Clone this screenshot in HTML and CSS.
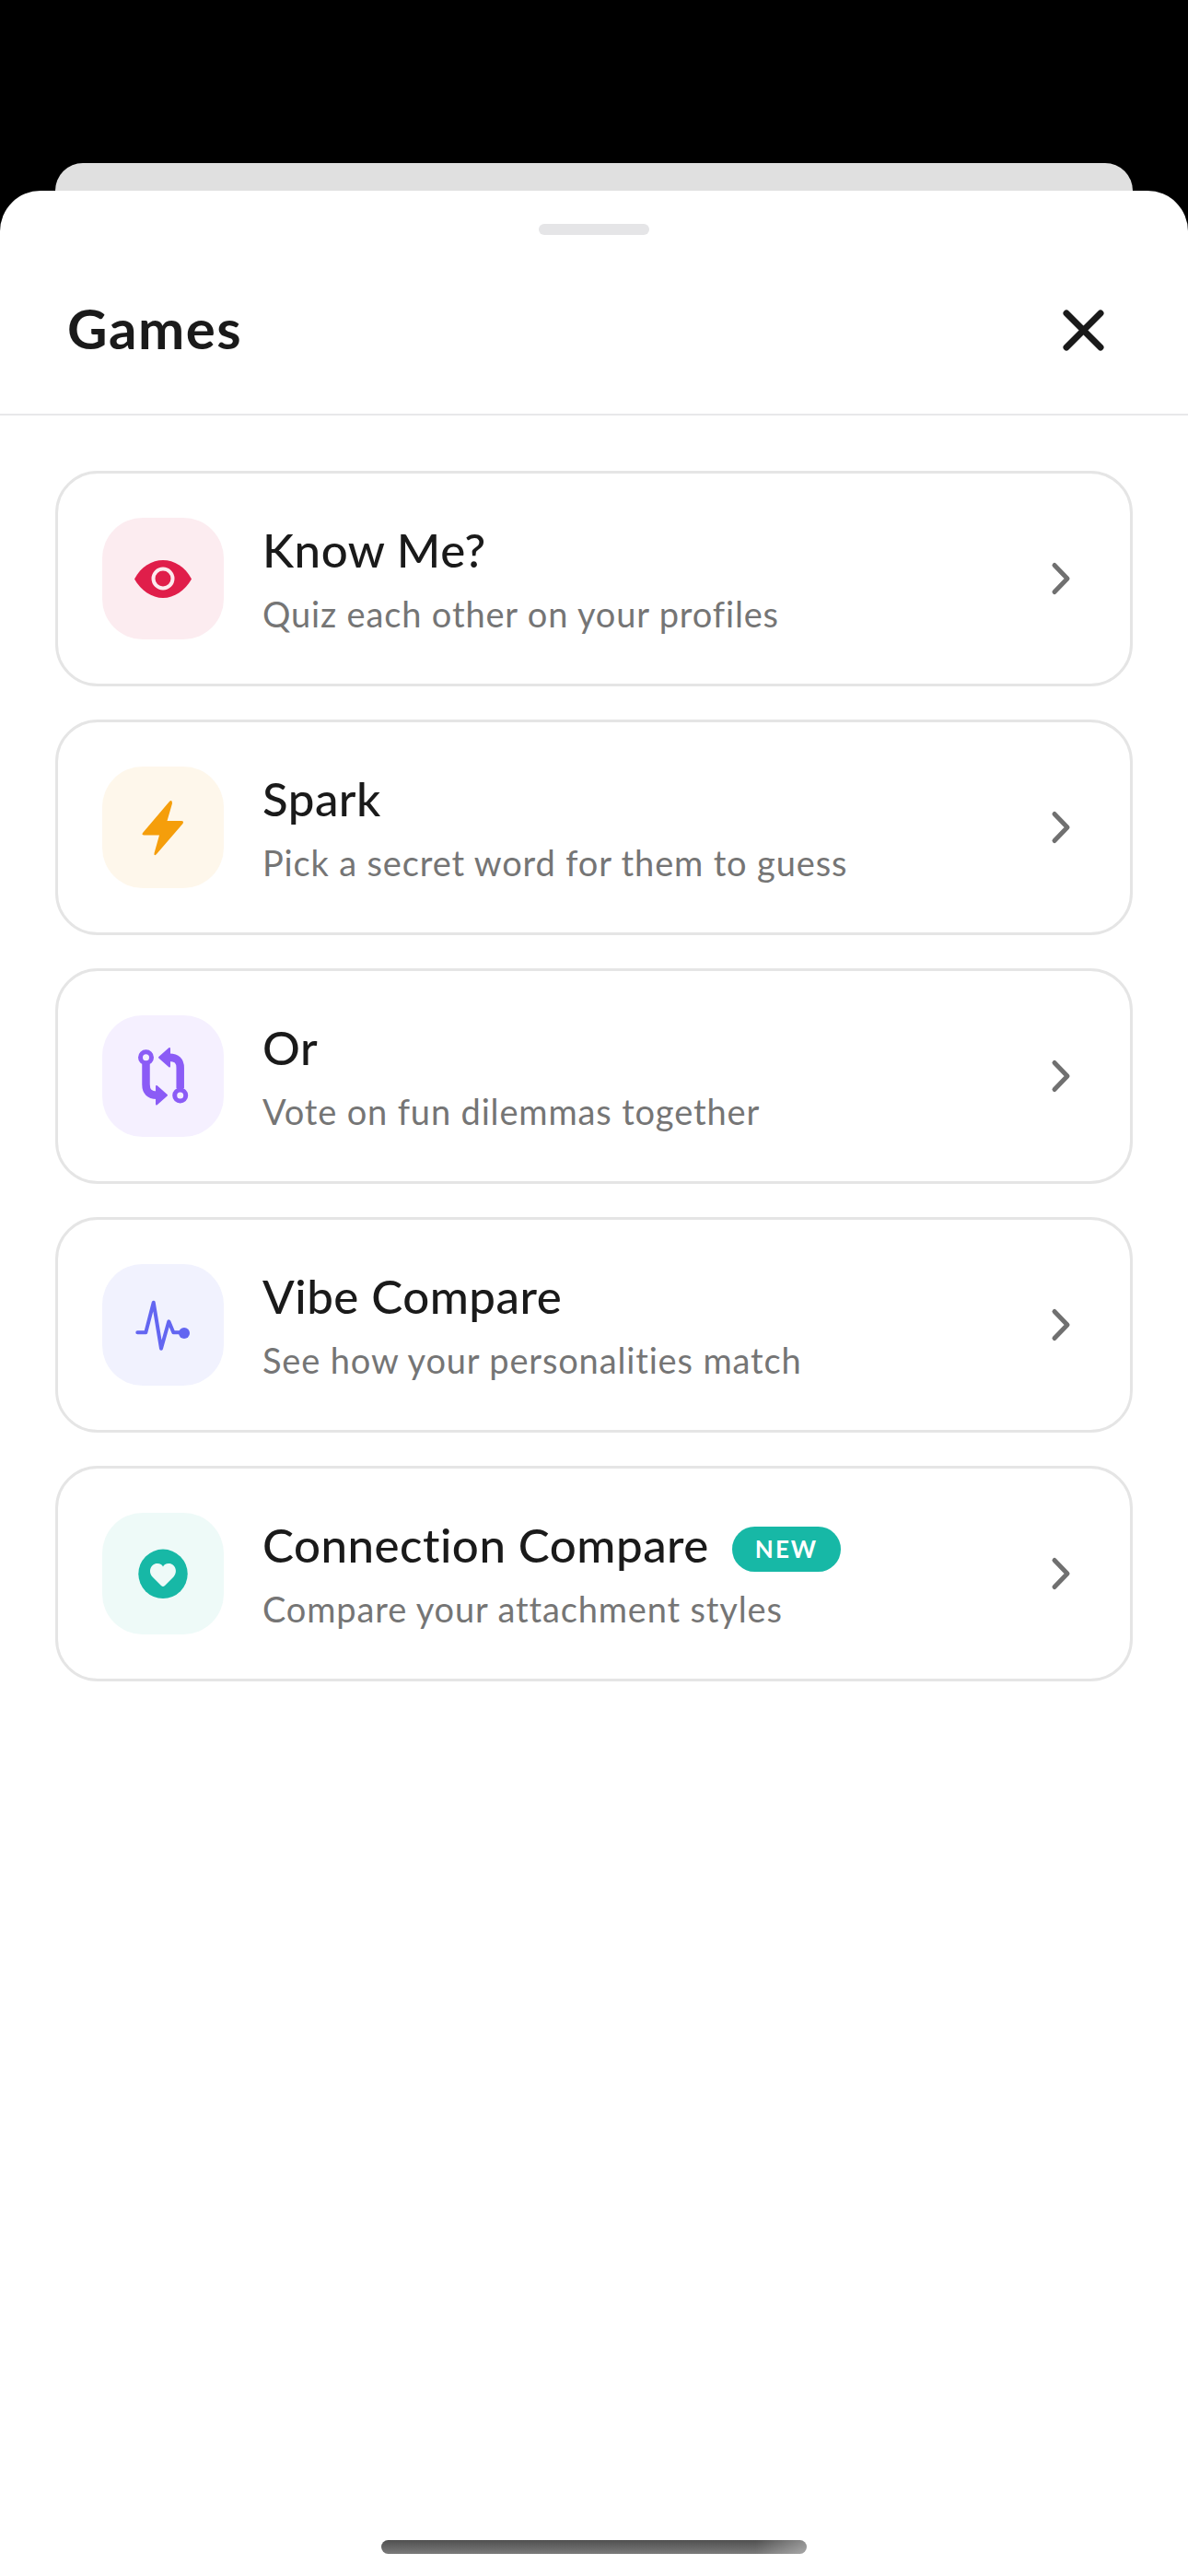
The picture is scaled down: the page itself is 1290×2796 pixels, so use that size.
FILE: index.html
```html
<!DOCTYPE html>
<html lang="en">
<head>
  <meta charset="UTF-8" />
  <title>Games</title>
  <link rel="stylesheet" href="styles.css">
</head>
<body>
  <div class="backdrop">
    <div class="back-card"></div>
  </div>

  <div class="sheet">
    <div class="handle"></div>

    <div class="sheet-header">
      <h2>Games</h2>
      <button class="close-btn" aria-label="Close">
        <svg viewBox="0 0 45 45" width="45" height="45">
          <path d="M4 4 L41 41 M41 4 L4 41" fill="none" stroke="#1a1a1a" stroke-width="7" stroke-linecap="round" />
        </svg>
      </button>
    </div>

    <div class="game-list">
      <div class="game-card">
        <div class="game-icon icon-red">
          <svg viewBox="0 0 132 132">
            <path d="M35 66.5 C42 53 54 46 66 46 C78 46 90 53 97 66.5 C90 79 78 87 66 87 C54 87 42 79 35 66.5 Z" fill="#e01e4a" />
            <circle cx="66" cy="66" r="10.5" fill="none" stroke="#fcebef" stroke-width="4" />
          </svg>
        </div>
        <div class="game-text">
          <div class="game-title">Know Me?</div>
          <div class="game-sub">Quiz each other on your profiles</div>
        </div>
        <svg class="chevron" viewBox="0 0 24 40"><path d="M5 5.5 L19 20 L5 34.5" /></svg>
      </div>

      <div class="game-card">
        <div class="game-icon icon-amber">
          <svg viewBox="0 0 132 132">
            <path d="M72.5 38.5 L44 72 Q42.5 74.5 45.5 74.5 H62 L56.5 94 Q56 98 59 95 L87.5 62 Q89 59 86 59 H70.5 L76 40 Q76 35 72.5 38.5 Z" fill="#f59e0b" />
          </svg>
        </div>
        <div class="game-text">
          <div class="game-title">Spark</div>
          <div class="game-sub">Pick a secret word for them to guess</div>
        </div>
        <svg class="chevron" viewBox="0 0 24 40"><path d="M5 5.5 L19 20 L5 34.5" /></svg>
      </div>

      <div class="game-card">
        <div class="game-icon icon-purple">
          <svg viewBox="0 0 132 132">
            <g fill="none" stroke="#8b5cf6" stroke-width="8.5">
              <path d="M47.5 53 V75 Q47.5 86.7 59 86.7 H62" />
              <path d="M84.7 79 V57 Q84.7 45.7 73 45.7 H70" />
            </g>
            <g fill="#f5f0ff" stroke="#8b5cf6" stroke-width="5">
              <circle cx="47.5" cy="45.7" r="6" />
              <circle cx="84.7" cy="87" r="6" />
            </g>
            <path d="M59 77 L70 86.7 L59 96.5 Z" fill="#8b5cf6" stroke="#8b5cf6" stroke-width="2" stroke-linejoin="round" />
            <path d="M73 36 L62 45.7 L73 55.5 Z" fill="#8b5cf6" stroke="#8b5cf6" stroke-width="2" stroke-linejoin="round" />
          </svg>
        </div>
        <div class="game-text">
          <div class="game-title">Or</div>
          <div class="game-sub">Vote on fun dilemmas together</div>
        </div>
        <svg class="chevron" viewBox="0 0 24 40"><path d="M5 5.5 L19 20 L5 34.5" /></svg>
      </div>

      <div class="game-card">
        <div class="game-icon icon-indigo">
          <svg viewBox="0 0 132 132">
            <path d="M38.3 74.3 H47.3 L55.7 41.7 L64 91.7 L72.3 62.3 L77.3 74.3 H86" fill="none" stroke="#6366f1" stroke-width="4" stroke-linecap="round" stroke-linejoin="round" />
            <circle cx="89" cy="75" r="6" fill="#6366f1" />
          </svg>
        </div>
        <div class="game-text">
          <div class="game-title">Vibe Compare</div>
          <div class="game-sub">See how your personalities match</div>
        </div>
        <svg class="chevron" viewBox="0 0 24 40"><path d="M5 5.5 L19 20 L5 34.5" /></svg>
      </div>

      <div class="game-card">
        <div class="game-icon icon-teal">
          <svg viewBox="0 0 132 132">
            <circle cx="66" cy="66.3" r="26.7" fill="#17b8a6" />
            <path d="M66 80 Q65 80 64 79 L54.5 69.5 C49 63 53.5 55 60 55 C63 55 65 56.5 66 58.5 C67 56.5 69 55 72 55 C78.5 55 83 63 77.5 69.5 L68 79 Q67 80 66 80 Z" fill="#eefaf8" />
          </svg>
        </div>
        <div class="game-text">
          <div class="game-title-row">
            <div class="game-title">Connection Compare</div>
            <span class="badge">NEW</span>
          </div>
          <div class="game-sub">Compare your attachment styles</div>
        </div>
        <svg class="chevron" viewBox="0 0 24 40"><path d="M5 5.5 L19 20 L5 34.5" /></svg>
      </div>
    </div>

    <div class="home-bar"></div>
  </div>
</body>
</html>
```

FILE: styles.css
```css
body {
  margin: 0;
  height: 2796px;
  background-color: #000;
  font-family: "Lato", "Open Sans", sans-serif;
  font-variant-ligatures: none;
  display: flex;
  flex-direction: column;
  overflow: hidden;
}

.backdrop {
  height: 207px;
  padding: 177px 60px 0;
  box-sizing: border-box;
  flex-shrink: 0;
}

.back-card {
  height: 30px;
  background: #e0e0e0;
  border-radius: 30px 30px 0 0;
}

.sheet {
  flex: 1;
  background: #fff;
  border-radius: 44px 44px 0 0;
  display: flex;
  flex-direction: column;
}

.handle {
  width: 120px;
  height: 12px;
  margin: 36px auto 0;
  background: #e5e5e7;
  border-radius: 6px;
}

.sheet-header {
  height: 196px;
  box-sizing: border-box;
  padding: 13px 91px 0 73px;
  border-bottom: 2px solid #e8e8ea;
  display: flex;
  justify-content: space-between;
  align-items: center;
}

.sheet-header h2 {
  margin: 0 0 6px;
  font-size: 60px;
  font-weight: 700;
  letter-spacing: 1.5px;
  color: #1a1a1a;
}

.close-btn {
  padding: 0;
  border: none;
  background: none;
  display: flex;
}

.game-list {
  padding: 60px 60px 0;
  display: flex;
  flex-direction: column;
  gap: 36px;
}

.game-card {
  height: 234px;
  box-sizing: border-box;
  border: 3px solid #e5e5e5;
  border-radius: 46px;
  padding: 0 63px 0 48px;
  display: flex;
  align-items: center;
}

.game-icon {
  width: 132px;
  height: 132px;
  border-radius: 44px;
  flex-shrink: 0;
}

.game-icon svg {
  display: block;
  width: 132px;
  height: 132px;
}

.icon-red { background: #fcecf0; }
.icon-amber { background: #fef7eb; }
.icon-purple { background: #f5f0ff; }
.icon-indigo { background: #f1f2fe; }
.icon-teal { background: #eefaf8; }

.game-text {
  flex: 1;
  margin-left: 42px;
  display: flex;
  flex-direction: column;
  gap: 15px;
}

.game-title-row {
  display: flex;
  align-items: center;
  gap: 25px;
}

.game-title {
  font-size: 51px;
  line-height: 60px;
  font-weight: 500;
  letter-spacing: 0.5px;
  color: #1a1a1a;
}

.game-sub {
  font-size: 38px;
  line-height: 48px;
  letter-spacing: 0.85px;
  color: #757575;
}

.badge {
  height: 49px;
  margin-top: 10px;
  padding: 0 25px;
  box-sizing: border-box;
  border-radius: 25px;
  background: #17b8a6;
  color: #fff;
  font-size: 26px;
  font-weight: 700;
  letter-spacing: 2px;
  line-height: 49px;
}

.chevron {
  width: 24px;
  height: 40px;
  flex-shrink: 0;
}

.chevron path {
  fill: none;
  stroke: #707070;
  stroke-width: 5;
  stroke-linecap: round;
  stroke-linejoin: round;
}

.home-bar {
  width: 462px;
  height: 15px;
  margin: auto auto 24px;
  border-radius: 8px;
  background: linear-gradient(90deg, transparent 88%, rgba(255, 255, 255, 0.35)), linear-gradient(180deg, #505050, #7a7a7a);
}
```
